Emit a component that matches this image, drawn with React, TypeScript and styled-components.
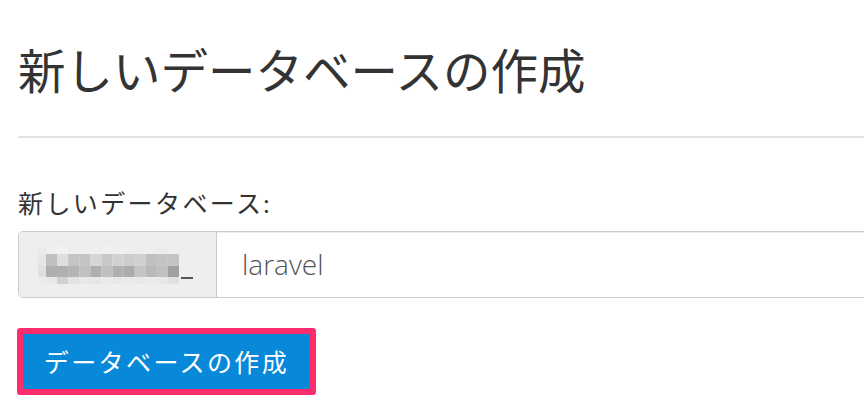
import React from "react";
import styled, { createGlobalStyle } from "styled-components";

const Global = createGlobalStyle`
  html, body { margin: 0; padding: 0; background: #fff; }
  body { font-family: Lato, "Noto Sans CJK JP", sans-serif; color: #333; }
`;

const Page = styled.div`
  width: 864px;
  height: 420px;
  overflow: hidden;
  padding-left: 18px;
  box-sizing: border-box;
`;

const Title = styled.h1`
  margin: 0;
  padding-top: 38px;
  font-size: 47.5px;
  font-weight: 400;
  line-height: 66px;
  color: #333;
  font-family: Lato, "Noto Sans CJK JP", sans-serif;
`;

const Divider = styled.hr`
  margin: 32px 0 0 0;
  border: 0;
  border-top: 2px solid #dfe2e5;
`;

const Label = styled.div`
  margin-top: 48px;
  font-size: 25px;
  letter-spacing: 2.4px;
  line-height: 34px;
  color: #333;
`;

const InputGroup = styled.div`
  display: flex;
  margin-top: 11px;
  height: 67px;
  width: 900px;
  box-sizing: border-box;
  border: 1px solid #cccccc;
  border-radius: 5px;
  overflow: hidden;
`;

const Addon = styled.div`
  width: 198px;
  flex: none;
  background: #eeeeee;
  border-right: 1px solid #cccccc;
  display: flex;
  align-items: center;
  padding-left: 19px;
  box-sizing: border-box;
`;

const Underscore = styled.span`
  display: block;
  width: 12px;
  height: 2px;
  margin-top: 26px;
  margin-left: 2px;
  background: #555;
`;

const Field = styled.div`
  flex: 1;
  background: #fff;
  box-shadow: inset 0 1px 1px rgba(0, 0, 0, 0.075);
  display: flex;
  align-items: center;
  padding-left: 25px;
  padding-bottom: 2px;
  font-size: 28px;
  color: #555;
  font-family: "Open Sans", "Noto Sans CJK JP", sans-serif;
  font-weight: 300;
`;

const Highlight = styled.div`
  display: inline-block;
  margin-top: 30px;
  margin-left: -1px;
  border: 6px solid #fd2c6d;
  border-radius: 3px;
`;

const Button = styled.button`
  display: block;
  width: 287px;
  height: 55px;
  border: 0;
  margin: 0;
  background: #0788d9;
  color: #fff;
  font-size: 25px;
  letter-spacing: 2.4px;
  font-family: Lato, "Noto Sans CJK JP", sans-serif;
  padding: 0 0 2px 0;
`;

const rows = [
  ["#ebebeb", "#efefef", "#f1f1f1", "#efefef", "#eeeeee", "#f0f0f0", "#f1f1f1", "#f0f0f0", "#efefef", "#eeeeee", "#efefef", "#ececec", "#eeeeee"],
  ["#e6e6e6", "#c0c0c0", "#dedede", "#c4c4c4", "#c4c4c4", "#d6d6d6", "#c8c8c8", "#d2d2d2", "#cccccc", "#d0d0d0", "#c0c0c0", "#c4c4c4", "#c4c4c4"],
  ["#e0e0e0", "#afafaf", "#b0b0b0", "#b4b4b4", "#c0c0c0", "#b0b0b0", "#c0c0c0", "#b0b0b0", "#acacac", "#c4c4c4", "#b8b8b8", "#c0c0c0", "#a0a0a0"],
  ["#ececec", "#e9e9e9", "#d0d0d0", "#e2e2e2", "#e8e8e8", "#e6e6e6", "#eaeaea", "#e8e8e8", "#eaeaea", "#e8e8e8", "#ebebeb", "#e8e8e8", "#e0e0e0"],
];
const rowH = [8, 12, 11, 7];

function Mosaic() {
  let y = 0;
  return (
    <svg width="141" height="38" viewBox="0 0 141 38" style={{ display: "block" }}>
      {rows.map((r, ri) => {
        const y0 = y;
        y += rowH[ri];
        return r.map((c, ci) => (
          <rect key={`${ri}-${ci}`} x={ci === 0 ? 0 : 8 + (ci - 1) * 11.08} y={y0} width={ci === 0 ? 8 : 11.08} height={rowH[ri]} fill={c} />
        ));
      })}
    </svg>
  );
}

export default function App() {
  return (
    <Page>
      <Global />
      <Title>新しいデータベースの作成</Title>
      <Divider />
      <Label>新しいデータベース:</Label>
      <InputGroup>
        <Addon>
          <Mosaic />
          <Underscore />
        </Addon>
        <Field>laravel</Field>
      </InputGroup>
      <Highlight>
        <Button>データベースの作成</Button>
      </Highlight>
    </Page>
  );
}
